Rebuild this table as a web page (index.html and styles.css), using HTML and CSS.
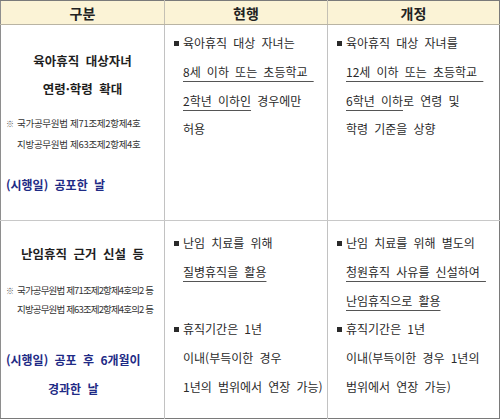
FILE: index.html
```html
<!DOCTYPE html>
<html lang="ko">
<head>
<meta charset="utf-8">
<link rel="stylesheet" href="styles.css">
</head>
<body>
<table class="cmp">
  <colgroup>
    <col class="c1"><col class="c2"><col class="c3">
  </colgroup>
  <thead>
    <tr class="head">
      <th>구분</th>
      <th>현행</th>
      <th>개정</th>
    </tr>
  </thead>
  <tbody>
    <tr class="row1">
      <td class="topic">
        <div class="title">육아휴직 대상자녀<br>연령·학령 확대</div>
        <div class="law law1">
          <div class="ln"><span class="mark">※</span>국가공무원법 제71조제2항제4호</div>
          <div class="ln ind">지방공무원법 제63조제2항제4호</div>
        </div>
        <div class="eff eff1">(시행일) 공포한 날</div>
      </td>
      <td class="body">
        <div class="item">
          <div class="ln"><span class="bul"></span>육아휴직 대상 자녀는</div>
          <div class="ln ind"><span class="u">8세 이하 또는 초등학교&nbsp;</span></div>
          <div class="ln ind"><span class="u">2학년 이하인</span> 경우에만</div>
          <div class="ln ind">허용</div>
        </div>
      </td>
      <td class="body">
        <div class="item">
          <div class="ln"><span class="bul"></span>육아휴직 대상 자녀를</div>
          <div class="ln ind"><span class="u">12세 이하 또는 초등학교&nbsp;</span></div>
          <div class="ln ind"><span class="u">6학년 이하</span>로 연령 및</div>
          <div class="ln ind">학령 기준을 상향</div>
        </div>
      </td>
    </tr>
    <tr class="row2">
      <td class="topic">
        <div class="title">난임휴직 근거 신설 등</div>
        <div class="law law2">
          <div class="ln"><span class="mark">※</span>국가공무원법 제71조제2항제4호의2 등</div>
          <div class="ln ind">지방공무원법 제63조제2항제4호의2 등</div>
        </div>
        <div class="eff eff2"><div class="effbox">(시행일) 공포 후 6개월이<br>경과한 날</div></div>
      </td>
      <td class="body">
        <div class="item">
          <div class="ln"><span class="bul"></span>난임 치료를 위해</div>
          <div class="ln ind"><span class="u">질병휴직을 활용</span></div>
          <div class="ln ind">&nbsp;</div>
          <div class="ln"><span class="bul"></span>휴직기간은 1년</div>
          <div class="ln ind">이내(부득이한 경우</div>
          <div class="ln ind">1년의 범위에서 연장 가능)</div>
        </div>
      </td>
      <td class="body">
        <div class="item">
          <div class="ln"><span class="bul"></span>난임 치료를 위해 별도의</div>
          <div class="ln ind"><span class="u">청원휴직 사유를 신설하여&nbsp;</span></div>
          <div class="ln ind"><span class="u">난임휴직으로 활용</span></div>
          <div class="ln"><span class="bul"></span>휴직기간은 1년</div>
          <div class="ln ind">이내(부득이한 경우 1년의</div>
          <div class="ln ind">범위에서 연장 가능)</div>
        </div>
      </td>
    </tr>
  </tbody>
</table>
</body>
</html>
```

FILE: styles.css
```css
html, body {
  margin: 0;
  padding: 0;
  background: #ffffff;
}

body {
  font-family: "Noto Sans CJK KR", "Noto Sans", sans-serif;
  color: #2a2a2a;
}

.cmp {
  border-collapse: collapse;
  table-layout: fixed;
  width: 499px;
  border-top: 1px solid #7a7a7a;
  border-left: 1px solid #8e8e8e;
  border-right: 1px solid #7a7a7a;
  border-bottom: 1px solid #7a7a7a;
}

.c1 { width: 164px; }
.c2 { width: 163px; }
.c3 { width: 172px; }

.head th {
  height: 23px;
  padding: 0;
  background: #fbf3d6;
  font-size: 14px;
  font-weight: 700;
  color: #222;
  text-align: center;
  vertical-align: middle;
  line-height: 20px;
  border-bottom: 1px solid #b9b4a3;
  border-left: 1px solid #c4c0b4;
}

.head th:first-child { border-left: none; }

td {
  padding: 0;
  vertical-align: top;
  border-left: 1px solid #c2c2c2;
}

td:first-child { border-left: none; }

.row1 td {
  height: 195px;
  border-bottom: 1px solid #c8c8c8;
}

.row2 td {
  height: 197px;
}

.ln {
  white-space: nowrap;
}

/* first column */
.topic {
  padding-left: 5px;
  overflow: hidden;
}

.title {
  text-align: center;
  font-size: 12.5px;
  font-weight: 700;
  line-height: 28px;
  word-spacing: 3px;
  color: #1e1e1e;
  padding-right: 5px;
}

.row1 .title { margin-top: 22px; }
.row2 .title { margin-top: 19px; }

.law {
  font-size: 9.5px;
  color: #333;
}

.law1 { margin-top: 10px; line-height: 20px; letter-spacing: -0.3px; }
.law2 { margin-top: 13px; line-height: 19px; letter-spacing: -0.85px; }

.law .mark {
  display: inline-block;
  width: 11px;
  font-size: 8px;
  color: #555;
  letter-spacing: 0;
}

.law .ind { padding-left: 11px; }

.eff {
  font-size: 12px;
  font-weight: 700;
  color: #1f2b86;
  word-spacing: 3px;
}

.eff1 { margin-top: 21px; line-height: 20px; }
.eff2 { margin-top: 26px; line-height: 29px; }

.effbox {
  display: inline-block;
  text-align: center;
}

/* body columns */
.body {
  padding-left: 9px;
  font-size: 12px;
  line-height: 28.8px;
  word-spacing: 2.8px;
  color: #2a2a2a;
}

.row1 .item { margin-top: 4px; }
.row2 .item { margin-top: 8px; }

.bul {
  display: inline-block;
  width: 5px;
  height: 5px;
  background: #2a2a2a;
  margin-right: 4px;
  vertical-align: 2px;
}

.ind { padding-left: 9px; }

.u {
  text-decoration: underline;
  text-decoration-color: #555;
  text-underline-offset: 4px;
  text-decoration-thickness: 1px;
}
```
